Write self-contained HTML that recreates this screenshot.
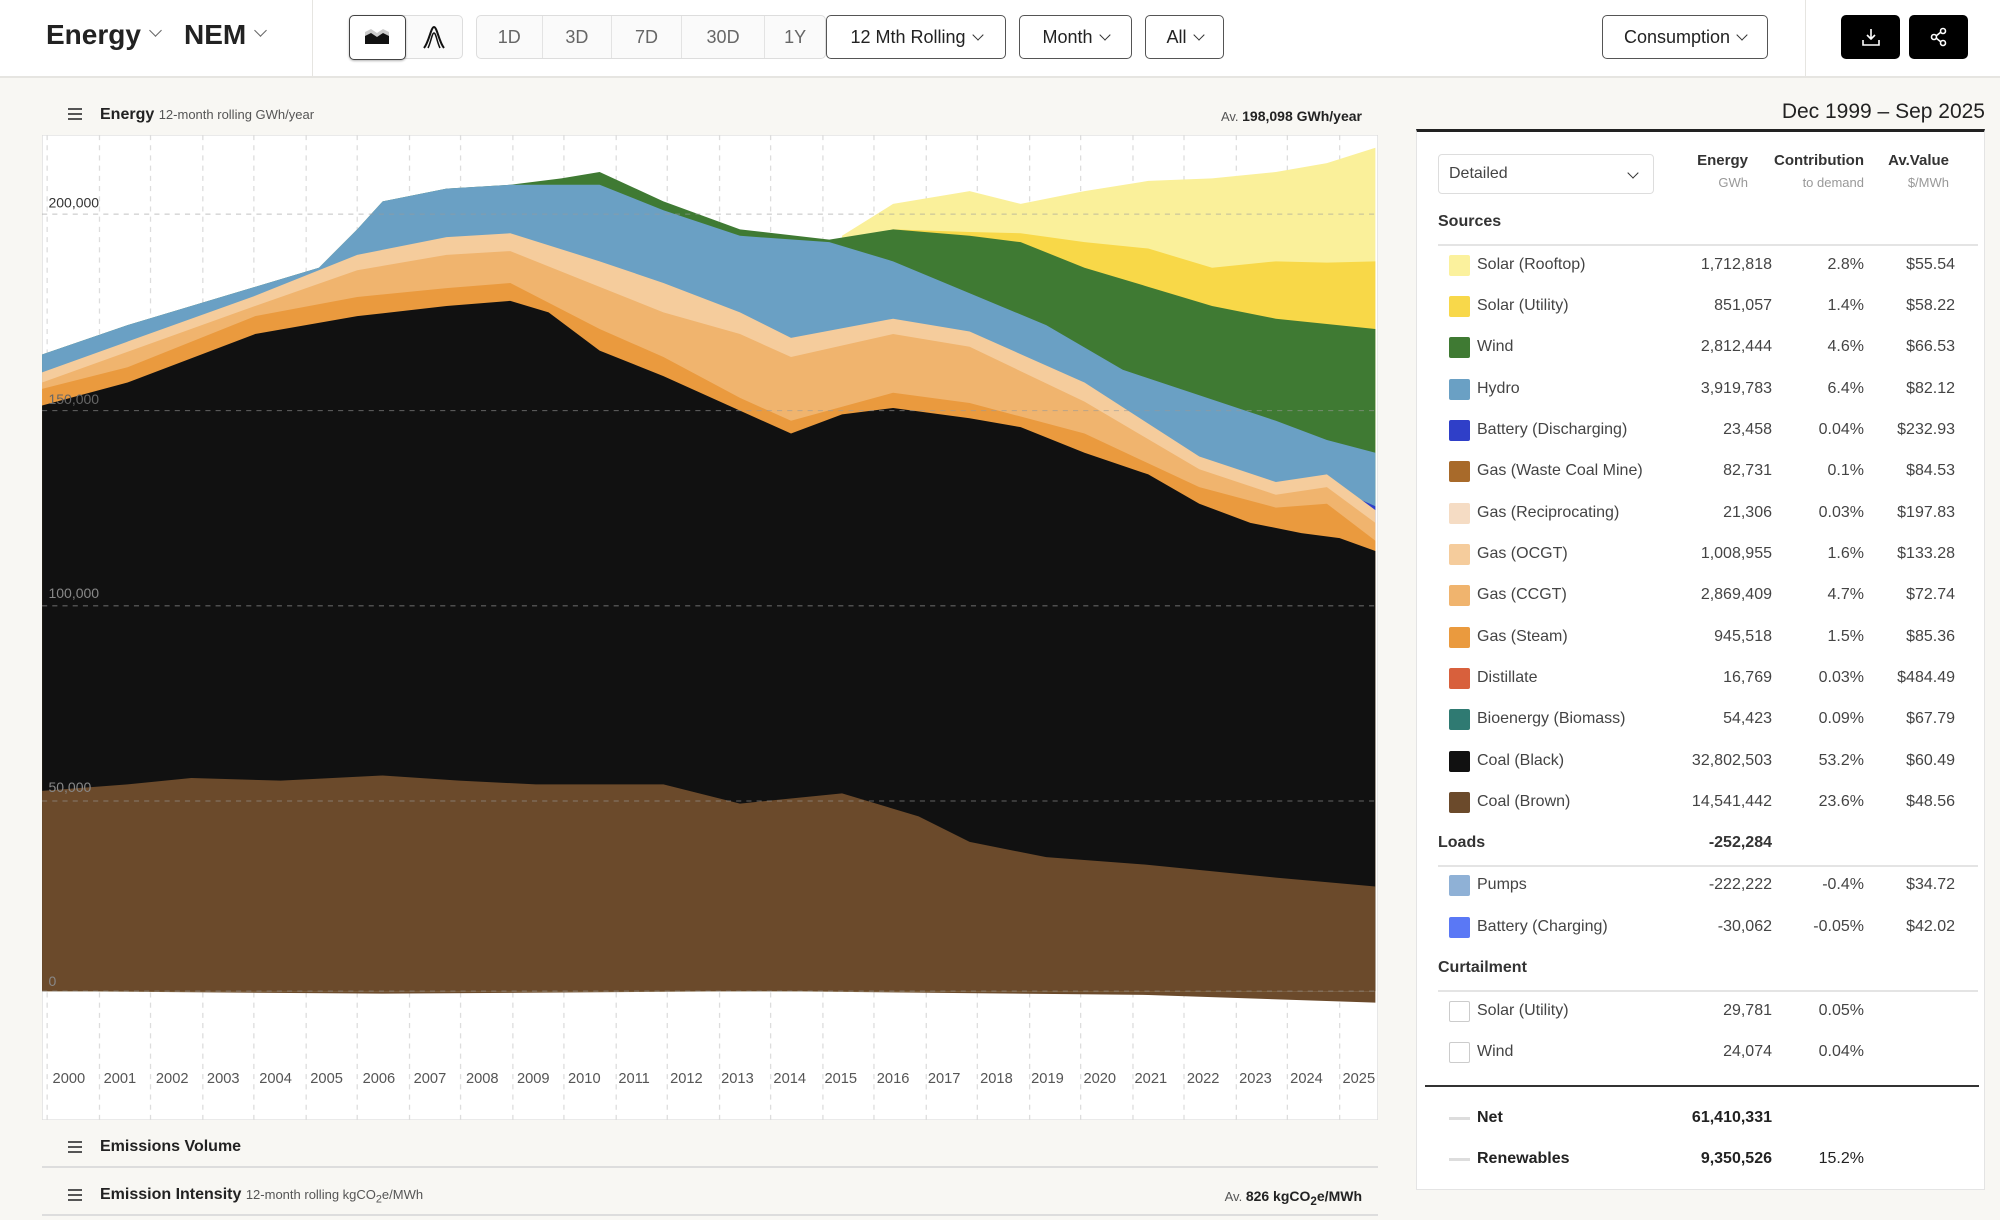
<!DOCTYPE html>
<html><head><meta charset="utf-8">
<style>
*{box-sizing:border-box;margin:0;padding:0}
body{width:2000px;height:1220px;overflow:hidden;background:#f8f7f3;font-family:"Liberation Sans",sans-serif;color:#222;position:relative}
.a{position:absolute}
.hdr{left:0;top:0;width:2000px;height:78px;background:#fff;border-bottom:2px solid #e6e5e1}
.btn{position:absolute;top:15px;height:44px;border:1.5px solid #555;border-radius:5px;background:#fff;font-size:18px;display:flex;align-items:center;justify-content:center;color:#222}
.grp{position:absolute;top:15px;height:44px;border:1.5px solid #ddd;border-radius:5px;background:#fafafa;display:flex}
.grp div{border-right:1.5px solid #e3e3e3;font-size:18px;color:#666;display:flex;align-items:center;justify-content:center}
.chev{display:inline-block;width:8px;height:8px;border-right:1.5px solid #333;border-bottom:1.5px solid #333;transform:rotate(45deg);margin-left:8px;margin-top:-5px}
.hchev{display:inline-block;width:9px;height:9px;border-right:1.5px solid #666;border-bottom:1.5px solid #666;transform:rotate(45deg);margin-left:10px;vertical-align:middle;position:relative;top:-6px}
.row{position:absolute;height:26px;line-height:26px;font-size:16px;color:#444}
.sw{position:absolute;left:1449px;width:21px;height:21px;border-radius:2px}
.r{position:absolute;text-align:right;font-size:16px;color:#444;height:26px;line-height:26px}
.sec{position:absolute;left:1438px;font-size:16px;font-weight:bold;color:#333}
.ln{position:absolute;left:1438px;width:540px;height:2px;background:#e4e4e4}
</style></head><body>
<div class="a hdr"></div>
<div class="a" style="left:46px;top:19px;font-size:28px;font-weight:bold;color:#222">Energy<span class="hchev"></span></div>
<div class="a" style="left:184px;top:19px;font-size:28px;font-weight:bold;color:#222">NEM<span class="hchev"></span></div>
<div class="a" style="left:312px;top:0;width:1px;height:78px;background:#e6e5e1"></div>
<div class="grp" style="left:349px;width:114px;border-color:#ddd">
 <div style="width:58px;border:1.5px solid #444;border-radius:5px;background:#fff;margin:-1.5px 0 -1.5px -1.5px;box-shadow:0 1px 2px rgba(0,0,0,.3)"><svg width="28" height="22" viewBox="0 0 28 22"><path d="M2 6 L8 3 L14 7 L20 3 L26 6 L26 18 L2 18Z" fill="#ccc"/><path d="M2 10 L8 7 L14 11 L20 7 L26 10 L26 18 L2 18Z" fill="#111"/></svg></div>
 <div style="width:56px;border:none"><svg width="26" height="26" viewBox="0 0 26 26"><path d="M3 24 C8 18 10 3 13 3 C16 3 18 18 23 24" fill="none" stroke="#111" stroke-width="2"/><path d="M7 24 C10 18 11 9 13 9 C15 9 16 18 19 24" fill="none" stroke="#111" stroke-width="1.5"/></svg></div>
</div>
<div class="grp" style="left:476px;width:350px">
 <div style="width:66px">1D</div><div style="width:70px">3D</div><div style="width:70px">7D</div><div style="width:84px">30D</div><div style="width:60px;border:none">1Y</div>
</div>
<div class="btn" style="left:826px;width:180px">12 Mth Rolling<span class="chev"></span></div>
<div class="btn" style="left:1019px;width:113px">Month<span class="chev"></span></div>
<div class="btn" style="left:1145px;width:79px">All<span class="chev"></span></div>
<div class="btn" style="left:1602px;width:166px">Consumption<span class="chev"></span></div>
<div class="a" style="left:1805px;top:0;width:1px;height:78px;background:#e6e5e1"></div>
<div class="btn" style="left:1841px;width:59px;background:#000;border-color:#000"><svg width="22" height="22" viewBox="0 0 22 22" fill="none" stroke="#fff" stroke-width="1.6"><path d="M11 3 V12 M7 9 L11 13 L15 9 M3 14 V19 H19 V14"/></svg></div>
<div class="btn" style="left:1909px;width:59px;background:#000;border-color:#000"><svg width="22" height="22" viewBox="0 0 22 22" fill="none" stroke="#fff" stroke-width="1.6"><circle cx="15" cy="5" r="2.5"/><circle cx="6" cy="11" r="2.5"/><circle cx="15" cy="17" r="2.5"/><path d="M8 10 L13 6 M8 12 L13 16"/></svg></div>

<div class="a" style="left:68px;top:108px;width:14px;height:2px;background:#555;box-shadow:0 5px 0 #555,0 10px 0 #555"></div>
<div class="a" style="left:100px;top:106px;font-size:16px"><b>Energy</b> <span style="font-size:13px;color:#555">12-month rolling GWh/year</span></div>
<div class="a" style="left:1100px;top:108px;width:262px;text-align:right;font-size:13px;color:#555">Av. <b style="color:#222;font-size:14px">198,098 GWh/year</b></div>

<svg class="a" style="left:42px;top:135px" width="1336" height="985" viewBox="33 106 1047 772">
<rect x="33" y="106" width="1047" height="772" fill="#fff" stroke="#ddd" stroke-width="1"/>
<g stroke="#ddd" stroke-dasharray="4 4" stroke-width="1">
<path d="M37 106V878M78 106V878M118 106V878M159 106V878M199 106V878M240 106V878M280 106V878M321 106V878M361 106V878M402 106V878M442 106V878M483 106V878M523 106V878M564 106V878M604 106V878M645 106V878M685 106V878M726 106V878M766 106V878M807 106V878M847 106V878M888 106V878M928 106V878M969 106V878M1009 106V878M1050 106V878"/>
</g>
<path d="M33 777 L300 779 L600 777 L900 780 L1078 786 L1078 777Z" fill="#6b4a2b"/>
<polygon fill="#faf09a" points="660,185 700,160 760,150 800,160 850,150 900,142 950,140 1000,135 1040,128 1078,116 1078,777 660,777"/>
<polygon fill="#f8d848" points="700,180 760,182 800,183 850,190 900,195 950,210 1000,205 1040,206 1078,205 1078,777 700,777"/>
<polygon fill="#3f7a33" points="33,278 100,255 200,225 250,210 280,180 300,158 350,148 400,145 440,140 470,135 520,158 580,180 650,188 700,180 760,185 800,190 850,210 900,225 950,240 1000,250 1078,258 1078,777 33,777"/>
<polygon fill="#6aa0c4" points="33,278 100,255 200,225 250,210 280,180 300,158 350,148 400,145 440,145 470,145 520,165 580,185 650,190 700,205 760,230 820,255 880,290 940,310 1000,330 1040,345 1078,355 1078,777 33,777"/>
<polygon fill="#2f3fc8" points="1000,382 1040,380 1078,397 1078,777 1000,777"/>
<polygon fill="#f5cc9c" points="33,292 200,232 280,200 350,186 400,183 470,205 520,222 580,245 620,265 700,250 760,260 850,300 940,358 1000,378 1040,372 1078,400 1078,777 33,777"/>
<polygon fill="#f0b46e" points="33,300 200,240 280,212 350,200 400,197 470,225 520,245 580,262 620,280 700,262 760,272 850,315 940,368 1000,388 1040,382 1078,410 1078,777 33,777"/>
<polygon fill="#ea9a3e" points="33,305 100,288 200,248 280,233 350,226 400,222 470,258 520,280 580,312 620,330 700,308 760,316 850,340 940,382 1000,398 1040,395 1078,424 1078,777 33,777"/>
<polygon fill="#111" points="33,318 100,300 200,262 280,248 350,240 400,236 430,245 470,275 520,295 580,322 620,340 660,325 700,320 760,328 800,335 850,355 900,372 940,395 980,410 1020,418 1050,422 1078,432 1078,777 33,777"/>
<polygon fill="#6b4a2b" points="33,620 100,615 150,610 220,612 300,608 360,612 420,615 520,615 580,630 660,622 720,640 760,660 820,672 900,678 1000,688 1078,695 1078,777 33,777"/>
<g stroke="#999" stroke-opacity="0.6" stroke-dasharray="4 4" stroke-width="0.8"><path d="M33 168H1080M33 322H1080M33 475H1080M33 628H1080M33 777H1080"/></g>
<g font-family="Liberation Sans" font-size="11" fill="#333">
<text x="38" y="163">200,000</text><text x="38" y="317" fill="#666">150,000</text><text x="38" y="469" fill="#888">100,000</text><text x="38" y="621" fill="#888">50,000</text><text x="38" y="773" fill="#888">0</text>
</g>
<g font-family="Liberation Sans" font-size="11.5" fill="#555" text-anchor="middle">
<text x="54" y="849">2000</text><text x="94" y="849">2001</text><text x="135" y="849">2002</text><text x="175" y="849">2003</text><text x="216" y="849">2004</text><text x="256" y="849">2005</text><text x="297" y="849">2006</text><text x="337" y="849">2007</text><text x="378" y="849">2008</text><text x="418" y="849">2009</text><text x="458" y="849">2010</text><text x="497" y="849">2011</text><text x="538" y="849">2012</text><text x="578" y="849">2013</text><text x="619" y="849">2014</text><text x="659" y="849">2015</text><text x="700" y="849">2016</text><text x="740" y="849">2017</text><text x="781" y="849">2018</text><text x="821" y="849">2019</text><text x="862" y="849">2020</text><text x="902" y="849">2021</text><text x="943" y="849">2022</text><text x="984" y="849">2023</text><text x="1024" y="849">2024</text><text x="1065" y="849">2025</text>
</g>
</svg>

<div class="a" style="left:68px;top:1141px;width:14px;height:2px;background:#555;box-shadow:0 5px 0 #555,0 10px 0 #555"></div>
<div class="a" style="left:100px;top:1138px;font-size:16px;font-weight:bold">Emissions Volume</div>
<div class="a" style="left:42px;top:1166px;width:1336px;height:2px;background:#ddd"></div>
<div class="a" style="left:68px;top:1189px;width:14px;height:2px;background:#555;box-shadow:0 5px 0 #555,0 10px 0 #555"></div>
<div class="a" style="left:100px;top:1186px;font-size:16px"><b>Emission Intensity</b> <span style="font-size:13px;color:#555">12-month rolling kgCO<sub>2</sub>e/MWh</span></div>
<div class="a" style="left:1100px;top:1188px;width:262px;text-align:right;font-size:13px;color:#555">Av. <b style="color:#222;font-size:14px">826 kgCO<sub>2</sub>e/MWh</b></div>
<div class="a" style="left:42px;top:1214px;width:1336px;height:2px;background:#ddd"></div>

<div class="a" style="top:100px;width:1385px;text-align:right;left:600px;font-size:21px;color:#222">Dec 1999 – Sep 2025</div>
<div class="a" style="left:1416px;top:129px;width:569px;height:1061px;background:#fff;border:1.5px solid #e4e4e4;border-top:3px solid #222"></div>
<div class="a" style="left:1438px;top:154px;width:216px;height:40px;border:1.5px solid #ddd;border-radius:4px;font-size:16px;color:#444;line-height:37px;padding-left:10px">Detailed<span class="chev" style="position:absolute;right:16px;top:14px;margin:0;border-color:#333"></span></div>
<div class="r" style="left:1648px;width:100px;top:148px;font-weight:bold;color:#333;font-size:15px">Energy</div>
<div class="r" style="left:1648px;width:100px;top:170px;font-size:13px;color:#999">GWh</div>
<div class="r" style="left:1740px;width:124px;top:148px;font-weight:bold;color:#333;font-size:15px">Contribution</div>
<div class="r" style="left:1740px;width:124px;top:170px;font-size:13px;color:#999">to demand</div>
<div class="r" style="left:1850px;width:99px;top:148px;font-weight:bold;color:#333;font-size:15px">Av.Value</div>
<div class="r" style="left:1850px;width:99px;top:170px;font-size:13px;color:#999">$/MWh</div>
<div class="sec" style="top:213px">Sources</div>
<div class="ln" style="top:244px"></div>

<div class="sw" style="top:255px;background:#fbf19d"></div><div class="row" style="left:1477px;top:252px">Solar (Rooftop)</div><div class="r" style="left:1650px;width:122px;top:252px">1,712,818</div><div class="r" style="left:1760px;width:104px;top:252px">2.8%</div><div class="r" style="left:1850px;width:105px;top:252px">$55.54</div>
<div class="sw" style="top:296px;background:#f8d84a"></div><div class="row" style="left:1477px;top:293px">Solar (Utility)</div><div class="r" style="left:1650px;width:122px;top:293px">851,057</div><div class="r" style="left:1760px;width:104px;top:293px">1.4%</div><div class="r" style="left:1850px;width:105px;top:293px">$58.22</div>
<div class="sw" style="top:337px;background:#3f7a33"></div><div class="row" style="left:1477px;top:334px">Wind</div><div class="r" style="left:1650px;width:122px;top:334px">2,812,444</div><div class="r" style="left:1760px;width:104px;top:334px">4.6%</div><div class="r" style="left:1850px;width:105px;top:334px">$66.53</div>
<div class="sw" style="top:379px;background:#6aa0c4"></div><div class="row" style="left:1477px;top:376px">Hydro</div><div class="r" style="left:1650px;width:122px;top:376px">3,919,783</div><div class="r" style="left:1760px;width:104px;top:376px">6.4%</div><div class="r" style="left:1850px;width:105px;top:376px">$82.12</div>
<div class="sw" style="top:420px;background:#2f3fc8"></div><div class="row" style="left:1477px;top:417px">Battery (Discharging)</div><div class="r" style="left:1650px;width:122px;top:417px">23,458</div><div class="r" style="left:1760px;width:104px;top:417px">0.04%</div><div class="r" style="left:1850px;width:105px;top:417px">$232.93</div>
<div class="sw" style="top:461px;background:#a86a2a"></div><div class="row" style="left:1477px;top:458px">Gas (Waste Coal Mine)</div><div class="r" style="left:1650px;width:122px;top:458px">82,731</div><div class="r" style="left:1760px;width:104px;top:458px">0.1%</div><div class="r" style="left:1850px;width:105px;top:458px">$84.53</div>
<div class="sw" style="top:503px;background:#f5dcc4"></div><div class="row" style="left:1477px;top:500px">Gas (Reciprocating)</div><div class="r" style="left:1650px;width:122px;top:500px">21,306</div><div class="r" style="left:1760px;width:104px;top:500px">0.03%</div><div class="r" style="left:1850px;width:105px;top:500px">$197.83</div>
<div class="sw" style="top:544px;background:#f5cc9c"></div><div class="row" style="left:1477px;top:541px">Gas (OCGT)</div><div class="r" style="left:1650px;width:122px;top:541px">1,008,955</div><div class="r" style="left:1760px;width:104px;top:541px">1.6%</div><div class="r" style="left:1850px;width:105px;top:541px">$133.28</div>
<div class="sw" style="top:585px;background:#f0b46e"></div><div class="row" style="left:1477px;top:582px">Gas (CCGT)</div><div class="r" style="left:1650px;width:122px;top:582px">2,869,409</div><div class="r" style="left:1760px;width:104px;top:582px">4.7%</div><div class="r" style="left:1850px;width:105px;top:582px">$72.74</div>
<div class="sw" style="top:627px;background:#ea9a3e"></div><div class="row" style="left:1477px;top:624px">Gas (Steam)</div><div class="r" style="left:1650px;width:122px;top:624px">945,518</div><div class="r" style="left:1760px;width:104px;top:624px">1.5%</div><div class="r" style="left:1850px;width:105px;top:624px">$85.36</div>
<div class="sw" style="top:668px;background:#d8603c"></div><div class="row" style="left:1477px;top:665px">Distillate</div><div class="r" style="left:1650px;width:122px;top:665px">16,769</div><div class="r" style="left:1760px;width:104px;top:665px">0.03%</div><div class="r" style="left:1850px;width:105px;top:665px">$484.49</div>
<div class="sw" style="top:709px;background:#2f7a72"></div><div class="row" style="left:1477px;top:706px">Bioenergy (Biomass)</div><div class="r" style="left:1650px;width:122px;top:706px">54,423</div><div class="r" style="left:1760px;width:104px;top:706px">0.09%</div><div class="r" style="left:1850px;width:105px;top:706px">$67.79</div>
<div class="sw" style="top:751px;background:#111"></div><div class="row" style="left:1477px;top:748px">Coal (Black)</div><div class="r" style="left:1650px;width:122px;top:748px">32,802,503</div><div class="r" style="left:1760px;width:104px;top:748px">53.2%</div><div class="r" style="left:1850px;width:105px;top:748px">$60.49</div>
<div class="sw" style="top:792px;background:#6b4a2b"></div><div class="row" style="left:1477px;top:789px">Coal (Brown)</div><div class="r" style="left:1650px;width:122px;top:789px">14,541,442</div><div class="r" style="left:1760px;width:104px;top:789px">23.6%</div><div class="r" style="left:1850px;width:105px;top:789px">$48.56</div>

<div class="sec" style="top:834px">Loads</div>
<div class="r" style="left:1650px;width:122px;top:830px;font-weight:bold;color:#333">-252,284</div>
<div class="ln" style="top:865px"></div>
<div class="sw" style="top:875px;background:#8fb1d6"></div><div class="row" style="left:1477px;top:872px">Pumps</div><div class="r" style="left:1650px;width:122px;top:872px">-222,222</div><div class="r" style="left:1760px;width:104px;top:872px">-0.4%</div><div class="r" style="left:1850px;width:105px;top:872px">$34.72</div>
<div class="sw" style="top:917px;background:#5a78f5"></div><div class="row" style="left:1477px;top:914px">Battery (Charging)</div><div class="r" style="left:1650px;width:122px;top:914px">-30,062</div><div class="r" style="left:1760px;width:104px;top:914px">-0.05%</div><div class="r" style="left:1850px;width:105px;top:914px">$42.02</div>

<div class="sec" style="top:959px">Curtailment</div>
<div class="ln" style="top:990px"></div>
<div class="sw" style="top:1001px;background:#fff;border:1.5px solid #ccc"></div><div class="row" style="left:1477px;top:998px">Solar (Utility)</div><div class="r" style="left:1650px;width:122px;top:998px">29,781</div><div class="r" style="left:1760px;width:104px;top:998px">0.05%</div>
<div class="sw" style="top:1042px;background:#fff;border:1.5px solid #ccc"></div><div class="row" style="left:1477px;top:1039px">Wind</div><div class="r" style="left:1650px;width:122px;top:1039px">24,074</div><div class="r" style="left:1760px;width:104px;top:1039px">0.04%</div>

<div class="a" style="left:1425px;top:1085px;width:554px;height:2px;background:#333"></div>
<div class="a" style="left:1449px;top:1117px;width:21px;height:3px;background:#ddd"></div>
<div class="row" style="left:1477px;top:1105px;font-weight:bold;color:#222">Net</div><div class="r" style="left:1650px;width:122px;top:1105px;font-weight:bold;color:#222">61,410,331</div>
<div class="a" style="left:1449px;top:1158px;width:21px;height:3px;background:#ddd"></div>
<div class="row" style="left:1477px;top:1146px;font-weight:bold;color:#222">Renewables</div><div class="r" style="left:1650px;width:122px;top:1146px;font-weight:bold;color:#222">9,350,526</div><div class="r" style="left:1760px;width:104px;top:1146px;color:#222">15.2%</div>
</body></html>
